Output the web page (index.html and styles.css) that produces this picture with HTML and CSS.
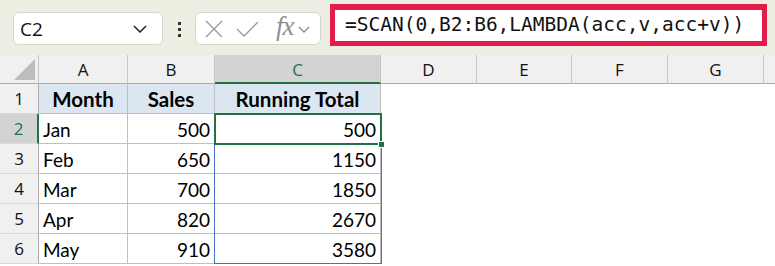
FILE: index.html
```html
<!DOCTYPE html>
<html>
<head>
<meta charset="utf-8">
<link rel="stylesheet" href="styles.css">
</head>
<body>
<div class="toolbar">
  <div class="namebox">
    <span class="nb-text">C2</span>
    <svg class="nb-chev" width="14" height="8" viewBox="0 0 14 8"><path d="M1 1 L7 7 L13 1" fill="none" stroke="#222" stroke-width="1.5"/></svg>
  </div>
  <div class="dots"><span></span><span></span><span></span></div>
  <div class="fxbox">
    <svg class="ic-x" width="18" height="18" viewBox="0 0 18 18"><path d="M1 1 L17 17 M17 1 L1 17" stroke="#9a9a9a" stroke-width="1.3" fill="none"/></svg>
    <svg class="ic-check" width="23" height="16" viewBox="0 0 23 16"><path d="M1 8 L8 15 L22 1" stroke="#9a9a9a" stroke-width="1.3" fill="none"/></svg>
    <span class="fx">fx</span>
    <svg class="fx-chev" width="12" height="7" viewBox="0 0 12 7"><path d="M1 1 L6 6 L11 1" fill="none" stroke="#8a8a8a" stroke-width="1.3"/></svg>
  </div>
  <div class="formula">=SCAN(0,B2:B6,LAMBDA(acc,v,acc+v))</div>
</div>
<div class="sheet">
  <div class="grid">
    <div class="corner"><span class="tri"></span></div>
    <div class="ch">A</div>
    <div class="ch">B</div>
    <div class="ch sel">C</div>
    <div class="ch">D</div>
    <div class="ch">E</div>
    <div class="ch">F</div>
    <div class="ch">G</div>
    <div class="ch last"></div>

    <div class="rh">1</div>
    <div class="c hd">Month</div>
    <div class="c hd">Sales</div>
    <div class="c hd">Running Total</div>
    <div class="e span"></div>

    <div class="rh sel">2</div>
    <div class="c">Jan</div>
    <div class="c num">500</div>
    <div class="c num">500</div>
    <div class="e span"></div>

    <div class="rh">3</div>
    <div class="c">Feb</div>
    <div class="c num">650</div>
    <div class="c num">1150</div>
    <div class="e span"></div>

    <div class="rh">4</div>
    <div class="c">Mar</div>
    <div class="c num">700</div>
    <div class="c num">1850</div>
    <div class="e span"></div>

    <div class="rh">5</div>
    <div class="c">Apr</div>
    <div class="c num">820</div>
    <div class="c num">2670</div>
    <div class="e span"></div>

    <div class="rh">6</div>
    <div class="c">May</div>
    <div class="c num">910</div>
    <div class="c num">3580</div>
    <div class="e span"></div>
  </div>
  <div class="spill"></div>
  <div class="active"><span class="handle"></span></div>
</div>
</body>
</html>
```
FILE: styles.css
```css
* { box-sizing: border-box; }
html, body { margin: 0; padding: 0; }
body {
  width: 775px;
  height: 266px;
  overflow: hidden;
  background: #ffffff;
  font-family: "Lato", "Liberation Sans", sans-serif;
}
.toolbar {
  height: 55px;
  background: #eeede1;
  display: flex;
  align-items: flex-start;
  padding-left: 13px;
  position: relative;
}
.namebox {
  margin-top: 12px;
  width: 150px;
  height: 33px;
  background: #fff;
  border: 1px solid #d6d5cb;
  border-radius: 6px;
  display: flex;
  align-items: center;
  justify-content: space-between;
  padding: 0 15px 0 6px;
}
.nb-text {
  font-family: "Open Sans", "Liberation Sans", sans-serif;
  font-size: 19px;
  color: #111;
}
.dots {
  margin-top: 22px;
  width: 32px;
  display: flex;
  flex-direction: column;
  align-items: center;
  gap: 3px;
}
.dots span {
  width: 3px;
  height: 3px;
  background: #333;
  display: block;
}
.fxbox {
  margin-top: 12px;
  width: 126px;
  height: 33px;
  background: #fff;
  border: 1px solid #d6d5cb;
  border-radius: 6px;
  display: flex;
  align-items: center;
  padding-left: 9px;
}
.ic-x { margin-right: 13px; }
.ic-check { margin-right: 17px; }
.fx {
  font-family: "Liberation Serif", "DejaVu Serif", serif;
  font-style: italic;
  font-size: 27px;
  color: #8f8f8f;
  margin-top: -4px;
  margin-right: 4px;
  letter-spacing: -1px;
}
.fx-chev { margin-top: 1px; }
.formula {
  margin-left: 9px;
  margin-top: 4px;
  width: 437px;
  height: 42px;
  background: #fff;
  border: 5px solid #e21d4b;
  border-top-width: 6px;
  font-family: "DejaVu Sans Mono", "Liberation Mono", monospace;
  font-size: 19.5px;
  color: #111;
  padding-left: 10px;
  line-height: 29px;
  white-space: nowrap;
}
.sheet {
  position: relative;
}
.grid {
  display: grid;
  grid-template-columns: 39px 89px 87px 166px 96px 95px 96px 96px 11px;
  grid-template-rows: 29px repeat(6, 30px);
}
.corner {
  background: #f0f0f0;
  border-right: 1px solid #c8c8c8;
  border-bottom: 1px solid #ababab;
  position: relative;
}
.tri {
  position: absolute;
  right: 3px;
  bottom: 3px;
  width: 0;
  height: 0;
  border-left: 21px solid transparent;
  border-bottom: 21px solid #bdbdbd;
}
.ch {
  background: #f0f0f0;
  border-right: 1px solid #c6c6c6;
  border-bottom: 1px solid #ababab;
  font-family: "Open Sans", "Liberation Sans", sans-serif;
  font-size: 17px;
  color: #111;
  display: flex;
  align-items: center;
  justify-content: center;
  padding-top: 1px;
}
.ch.sel {
  background: #d3d3d3;
  color: #217346;
  border-bottom: 2px solid #217346;
}
.ch.last { border-right: none; }
.rh {
  background: #f0f0f0;
  border-right: 1px solid #ababab;
  border-bottom: 1px solid #dadada;
  font-family: "Open Sans", "Liberation Sans", sans-serif;
  font-size: 17px;
  color: #111;
  display: flex;
  align-items: center;
  justify-content: center;
}
.rh.sel {
  background: #d3d3d3;
  color: #217346;
  border-right: 2px solid #217346;
}
.c {
  border-right: 1px solid #bfbfbf;
  border-bottom: 1px solid #bfbfbf;
  font-size: 19px;
  color: #000;
  display: flex;
  align-items: center;
  padding: 1px 4px 0 4px;
  white-space: nowrap;
}
.c.hd {
  background: #dce6f1;
  font-weight: bold;
  font-size: 20.5px;
  justify-content: center;
}
.c.num { justify-content: flex-end; }
.e.span { grid-column: span 5; }
.spill {
  position: absolute;
  left: 214px;
  top: 58px;
  width: 168px;
  height: 151px;
  border: 1px solid #4472c4;
}
.active {
  position: absolute;
  left: 214px;
  top: 58px;
  width: 168px;
  height: 32px;
  border: 2px solid #217346;
}
.handle {
  position: absolute;
  right: -5px;
  bottom: -5px;
  width: 7px;
  height: 7px;
  background: #217346;
  border: 1px solid #fff;
}
```
